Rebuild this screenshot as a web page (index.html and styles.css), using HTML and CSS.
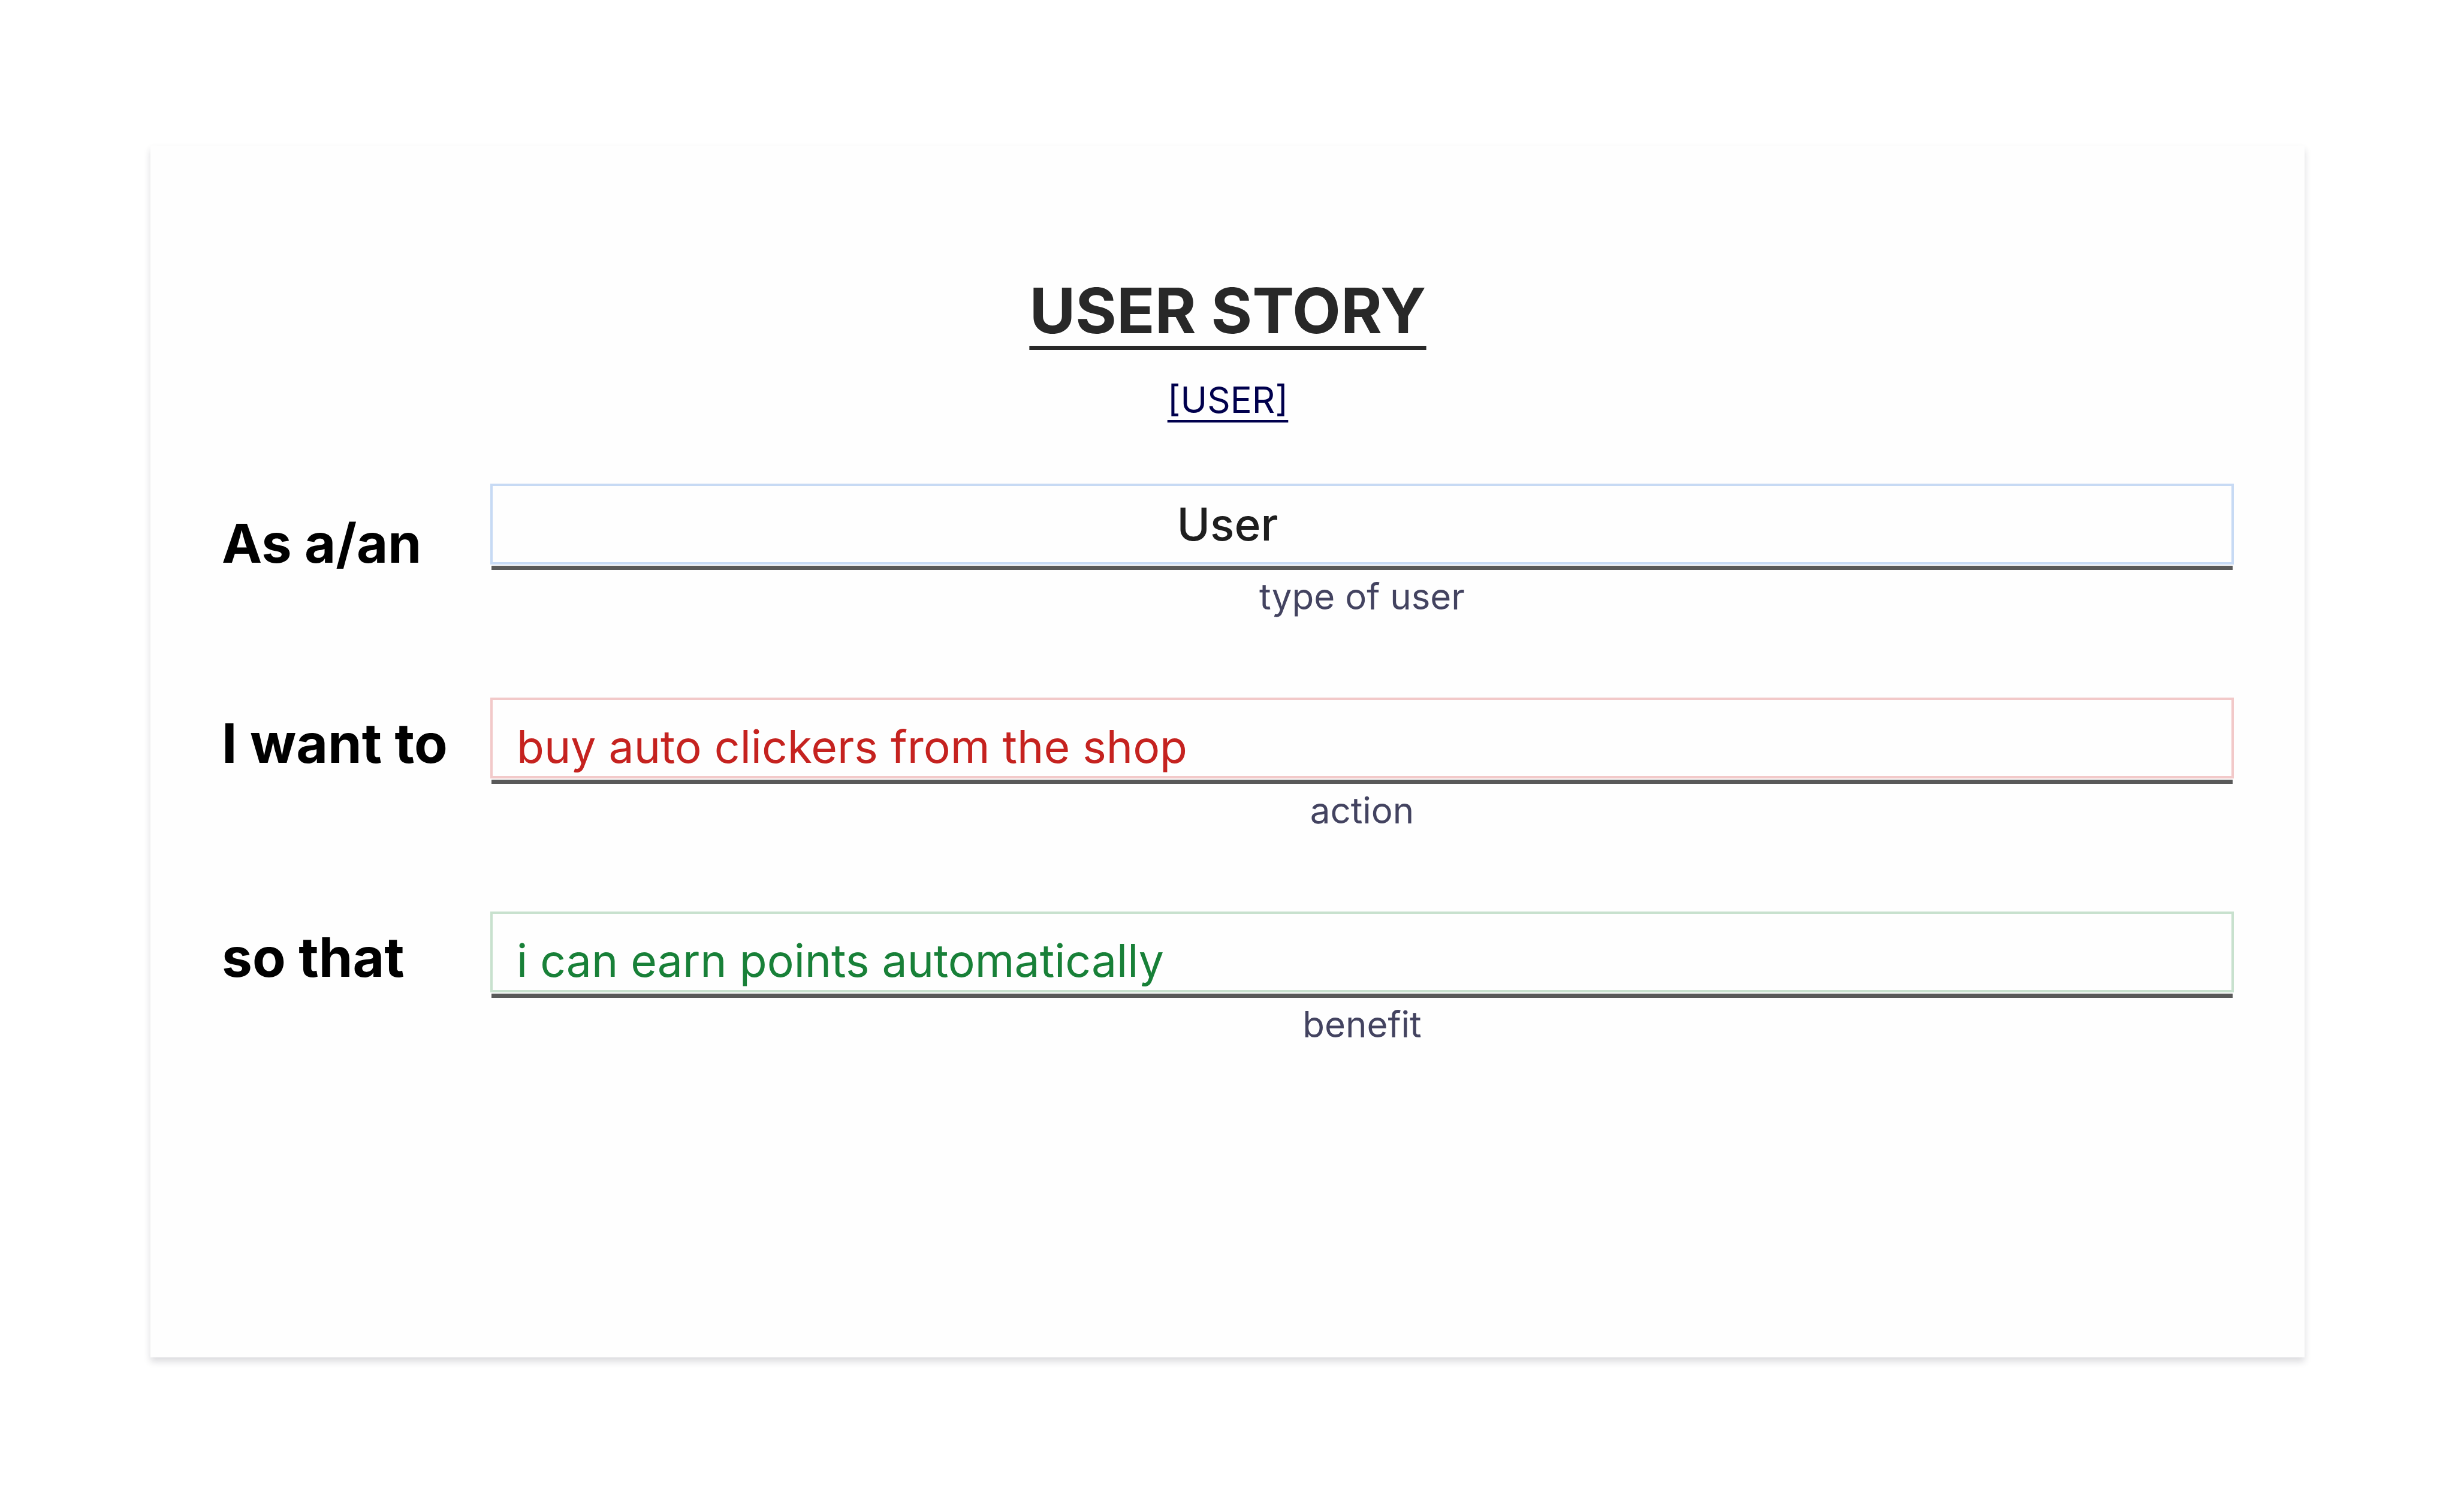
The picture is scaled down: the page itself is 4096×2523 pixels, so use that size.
FILE: index.html
```html
<!DOCTYPE html>
<html lang="en">
<head>
<meta charset="utf-8">
<title>User Story</title>
<link rel="stylesheet" href="styles.css">
</head>
<body>
<main class="card">
  <header class="heading">
    <h1 class="title">USER STORY</h1>
    <a class="role" href="#user">[USER]</a>
  </header>
  <form class="story">
    <div class="row row-user">
      <label class="lead" for="user">As a/an</label>
      <div class="field">
        <input class="entry" id="user" type="text" value="User" aria-describedby="user-hint">
        <div class="rule"></div>
        <p class="hint" id="user-hint">type of user</p>
      </div>
    </div>
    <div class="row row-action">
      <label class="lead" for="action">I want to</label>
      <div class="field">
        <input class="entry" id="action" type="text" value="buy auto clickers from the shop" aria-describedby="action-hint">
        <div class="rule"></div>
        <p class="hint" id="action-hint">action</p>
      </div>
    </div>
    <div class="row row-benefit">
      <label class="lead" for="benefit">so that</label>
      <div class="field">
        <input class="entry" id="benefit" type="text" value="i can earn points automatically" aria-describedby="benefit-hint">
        <div class="rule"></div>
        <p class="hint" id="benefit-hint">benefit</p>
      </div>
    </div>
  </form>
</main>
</body>
</html>
```
FILE: styles.css
```css
* {
  box-sizing: border-box;
}

body {
  margin: 0;
  min-height: 100vh;
  padding: 243px 251px 258px;
  display: flex;
  background: #fff;
  font-family: Inter, "Liberation Sans", sans-serif;
}

.card {
  flex: 1;
  padding: 211px 118px 211px 119px;
  background: #fefefe;
  box-shadow: 0 7px 11px rgba(30, 30, 50, 0.16);
}

.heading {
  display: flex;
  flex-direction: column;
  align-items: center;
  gap: 41px;
  margin-bottom: 96px;
}

.title {
  margin: 0;
  font-size: 105px;
  font-weight: 700;
  line-height: 128px;
  color: #282828;
  text-decoration: underline;
  text-decoration-thickness: 7px;
  text-underline-offset: 21px;
  text-decoration-skip-ink: none;
}

.role {
  font-size: 60px;
  line-height: 88px;
  color: #00004d;
  text-decoration-thickness: 4px;
  text-underline-offset: 12px;
  text-decoration-skip-ink: none;
}

.story {
  display: flex;
  flex-direction: column;
  gap: 125px;
}

.row {
  display: grid;
  grid-template-columns: 448px 1fr;
  align-items: start;
}

.lead {
  font-size: 91px;
  font-weight: 700;
  line-height: 152px;
  color: #000;
}

.row-user .lead {
  padding-top: 24px;
  font-size: 90px;
}

.entry {
  display: block;
  width: 100%;
  height: 135px;
  margin: 0;
  padding: 28px 40px 0;
  border: 4px solid;
  border-radius: 0;
  outline: 0;
  background: transparent;
  font-family: inherit;
  font-size: 75px;
}

/* The role is centred on the card, not on its own box. */
.row-user .entry {
  padding: 0 449px 0 0;
  border-color: #c7daf4;
  font-weight: 500;
  color: #1e1e1e;
  text-align: center;
}

.row-action .entry {
  border-color: #f2c9c9;
  color: #c5221f;
}

.row-benefit .entry {
  border-color: #c8e1ce;
  color: #188038;
}

.rule {
  height: 7px;
  margin: 2px 2px 0;
  background: #595959;
}

.hint {
  margin: 0;
  font-size: 60px;
  line-height: 88px;
  color: #434360;
  text-align: center;
}
```
